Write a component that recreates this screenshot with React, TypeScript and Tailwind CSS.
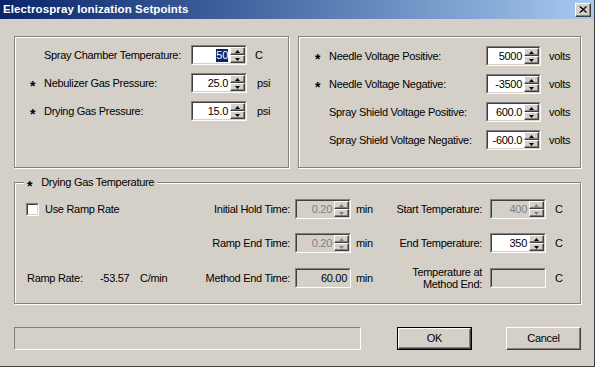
import React from "react";

function Arrow({ up, disabled }: { up: boolean; disabled?: boolean }) {
  const c = disabled ? "#808080" : "#000000";
  return (
    <svg width="5" height="3" viewBox="0 0 5 3" className="block">
      {up ? <polygon points="2.5,0 5,3 0,3" fill={c} /> : <polygon points="0,0 5,0 2.5,3" fill={c} />}
    </svg>
  );
}

function SpinBtn({ up, disabled }: { up: boolean; disabled?: boolean }) {
  return (
    <div className="flex-1 flex items-center justify-center bg-[#d4d0c8] border border-t-white border-l-white border-b-[#404040] border-r-[#404040] shadow-[inset_-1px_-1px_0_#808080]">
      <Arrow up={up} disabled={disabled} />
    </div>
  );
}

function Edit({
  value,
  disabled,
  readOnly,
  selected,
  spin = true,
  w = "w-[56px]",
}: {
  value?: string;
  disabled?: boolean;
  readOnly?: boolean;
  selected?: boolean;
  spin?: boolean;
  w?: string;
}) {
  const grey = disabled || readOnly;
  return (
    <div className={`${w} h-[20px] shrink-0 border border-t-[#808080] border-l-[#808080] border-b-white border-r-white`}>
      <div
        className={`h-full flex border border-t-[#404040] border-l-[#404040] border-b-[#d4d0c8] border-r-[#d4d0c8] ${
          grey ? "bg-[#d4d0c8]" : "bg-white"
        }`}
      >
        <div className={`flex-1 flex items-center justify-end pr-[2px] ${disabled ? "text-[#808080]" : "text-black"}`}>
          {selected ? <span className="bg-[#0a246a] text-white leading-[13px]">{value}</span> : value}
        </div>
        {spin && (
          <div className="w-[15px] flex flex-col">
            <SpinBtn up disabled={disabled} />
            <SpinBtn up={false} disabled={disabled} />
          </div>
        )}
      </div>
    </div>
  );
}

function Star() {
  return <span className="relative top-[3px] text-[14px] font-bold leading-none">*</span>;
}

function Group({ className, children }: { className: string; children?: React.ReactNode }) {
  return (
    <div className={`border border-[#808080] shadow-[inset_1px_1px_0_#fff,1px_1px_0_#fff] ${className}`}>{children}</div>
  );
}

function Button({ label, def }: { label: string; def?: boolean }) {
  const inner = (
    <div className="h-full flex items-center justify-center border border-t-white border-l-white border-b-[#404040] border-r-[#404040] shadow-[inset_-1px_-1px_0_#808080] bg-[#d4d0c8]">
      {label}
    </div>
  );
  return def ? (
    <div className="w-[75px] h-[23px] border border-black">{inner}</div>
  ) : (
    <div className="w-[75px] h-[23px]">{inner}</div>
  );
}

export default function App() {
  const leftRows = [
    { star: false, label: "Spray Chamber Temperature:", value: "50", unit: "C", selected: true },
    { star: true, label: "Nebulizer Gas Pressure:", value: "25.0", unit: "psi", unitPad: "pl-[10px]" },
    { star: true, label: "Drying Gas Pressure:", value: "15.0", unit: "psi", unitPad: "pl-[10px]" },
  ];
  const rightRows = [
    { star: true, label: "Needle Voltage Positive:", value: "5000" },
    { star: true, label: "Needle Voltage Negative:", value: "-3500" },
    { star: false, label: "Spray Shield Voltage Positive:", value: "600.0" },
    { star: false, label: "Spray Shield Voltage Negative:", value: "-600.0" },
  ];

  return (
    <div className="w-[595px] h-[367px] bg-[#d4d0c8] flex flex-col border-r border-b border-[#404040] font-['Liberation_Sans',Arial,sans-serif] text-[11px] tracking-[-0.3px] text-black overflow-hidden">
      {/* Title bar */}
      <div className="h-[19px] shrink-0 flex items-center justify-between pl-[3px] pr-[3px] bg-linear-to-r from-[#0a246a] to-[#a6caf0]">
        <span className="text-white font-bold text-[11.5px] tracking-[0.1px]">Electrospray Ionization Setpoints</span>
        <div className="w-[16px] h-[14px] border border-t-white border-l-white border-b-[#404040] border-r-[#404040] shadow-[inset_-1px_-1px_0_#808080] bg-[#d4d0c8] flex items-center justify-center">
          <svg width="8" height="7" viewBox="0 0 8 7" className="block">
            <path d="M0.5 0.5 L7 6.5 M1.5 0.5 L8 6.5 M7 0.5 L0.5 6.5 M8 0.5 L1.5 6.5" stroke="#000" strokeWidth="1" />
          </svg>
        </div>
      </div>

      <div className="flex flex-col pl-[14px] pt-[17px]">
        <div className="flex gap-[9px]">
          <Group className="w-[275px] h-[132px] pt-[8px] flex flex-col gap-[8px]">
            {leftRows.map((r) => (
              <div key={r.label} className="h-[20px] flex items-center">
                <div className="w-[29px] pl-[15px] h-full flex items-center">{r.star && <Star />}</div>
                <div className="w-[147px] whitespace-nowrap">{r.label}</div>
                <Edit value={r.value} selected={r.selected} />
                <div className={r.unitPad ?? "pl-[8px]"}>{r.unit}</div>
              </div>
            ))}
          </Group>
          <Group className="w-[283px] h-[132px] pt-[9px] flex flex-col gap-[8px]">
            {rightRows.map((r) => (
              <div key={r.label} className="h-[20px] flex items-center">
                <div className="w-[30px] pl-[16px] h-full flex items-center">{r.star && <Star />}</div>
                <div className="w-[157px] whitespace-nowrap">{r.label}</div>
                <Edit value={r.value} w="w-[55px]" />
                <div className="pl-[8px]">volts</div>
              </div>
            ))}
          </Group>
        </div>

        <Group className="relative mt-[14px] w-[567px] h-[122px] pt-[16px] flex flex-col">
          <div className="absolute left-[9px] top-[-8px] px-[3px] bg-[#d4d0c8] flex items-center h-[15px]">
            <Star />
            <span className="ml-[9px]">Drying Gas Temperature</span>
          </div>

          {/* Row 1 */}
          <div className="h-[20px] flex items-center">
            <div className="w-[170px] pl-[11px] flex items-center">
              <div className="w-[13px] h-[13px] border border-t-[#808080] border-l-[#808080] border-b-white border-r-white">
                <div className="h-full border border-t-[#404040] border-l-[#404040] border-b-[#d4d0c8] border-r-[#d4d0c8] bg-white" />
              </div>
              <span className="ml-[6px]">Use Ramp Rate</span>
            </div>
            <div className="w-[105px] text-right whitespace-nowrap">Initial Hold Time:</div>
            <div className="w-[5px]" />
            <Edit value="0.20" disabled />
            <div className="w-[40px] pl-[5px]">min</div>
            <div className="w-[91px] text-right whitespace-nowrap">Start Temperature:</div>
            <div className="w-[8px]" />
            <Edit value="400" disabled />
            <div className="pl-[9px]">C</div>
          </div>

          {/* Row 2 */}
          <div className="h-[20px] mt-[14px] flex items-center">
            <div className="w-[170px]" />
            <div className="w-[105px] text-right whitespace-nowrap">Ramp End Time:</div>
            <div className="w-[5px]" />
            <Edit value="0.20" disabled />
            <div className="w-[40px] pl-[5px]">min</div>
            <div className="w-[91px] text-right whitespace-nowrap">End Temperature:</div>
            <div className="w-[8px]" />
            <Edit value="350" />
            <div className="pl-[9px]">C</div>
          </div>

          {/* Row 3 */}
          <div className="h-[20px] mt-[15px] flex items-center">
            <div className="w-[170px] pl-[12px] flex items-center">
              <span className="w-[73px]">Ramp Rate:</span>
              <span className="w-[40px]">-53.57</span>
              <span>C/min</span>
            </div>
            <div className="w-[105px] text-right whitespace-nowrap">Method End Time:</div>
            <div className="w-[5px]" />
            <Edit value="60.00" readOnly spin={false} />
            <div className="w-[40px] pl-[5px]">min</div>
            <div className="w-[91px] text-right leading-[12px]">
              Temperature at
              <br />
              Method End:
            </div>
            <div className="w-[8px]" />
            <Edit value="" readOnly spin={false} />
            <div className="pl-[9px]">C</div>
          </div>
        </Group>

        <div className="mt-[23px] flex items-center">
          <div className="w-[347px] h-[23px] border border-t-[#808080] border-l-[#808080] border-b-white border-r-white" />
          <div className="ml-[36px]">
            <Button label="OK" def />
          </div>
          <div className="ml-[34px]">
            <Button label="Cancel" />
          </div>
        </div>
      </div>
    </div>
  );
}
